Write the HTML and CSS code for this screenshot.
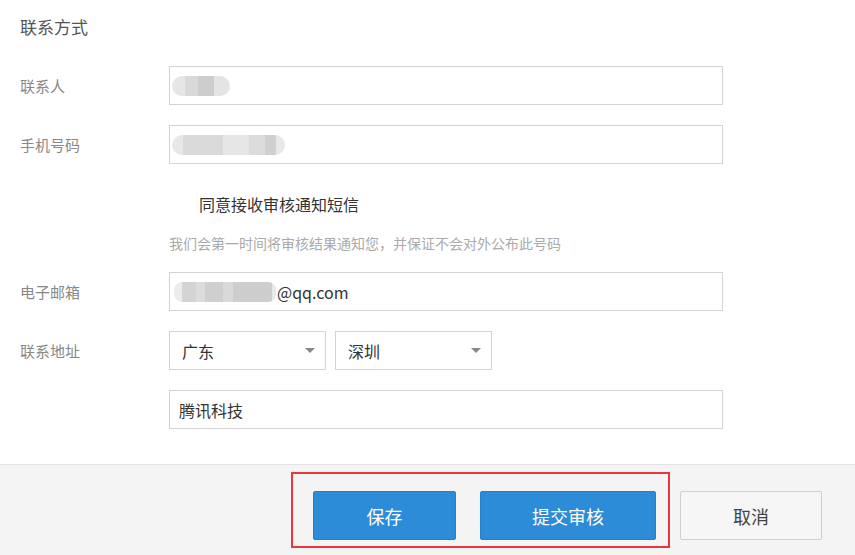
FILE: index.html
```html
<!DOCTYPE html>
<html lang="zh-CN">
<head>
<meta charset="utf-8">
<title>联系方式</title>
<link rel="stylesheet" href="styles.css">
</head>
<body>
<div class="page">
  <div class="content">
    <h2 class="title">联系方式</h2>
    <div class="row">
      <label class="label">联系人</label>
      <div class="field"><div class="input"><span class="blur blur-a"></span></div></div>
    </div>
    <div class="row">
      <label class="label">手机号码</label>
      <div class="field"><div class="input"><span class="blur blur-b"></span></div></div>
    </div>
    <div class="check-row">
      <span class="check-box"></span>
      <span class="check-text">同意接收审核通知短信</span>
    </div>
    <div class="hint">我们会第一时间将审核结果通知您，并保证不会对外公布此号码</div>
    <div class="row row-email">
      <label class="label">电子邮箱</label>
      <div class="field"><div class="input"><span class="blur blur-c"></span><span class="val">@qq.com</span></div></div>
    </div>
    <div class="row">
      <label class="label">联系地址</label>
      <div class="field selects">
        <div class="select"><span class="val">广东</span><span class="arrow"></span></div>
        <div class="select"><span class="val">深圳</span><span class="arrow"></span></div>
      </div>
    </div>
    <div class="row">
      <span class="label"></span>
      <div class="field"><div class="input"><span class="val">腾讯科技</span></div></div>
    </div>
  </div>
  <div class="footer">
    <div class="highlight">
      <button class="btn btn-primary btn-save">保存</button>
      <button class="btn btn-primary btn-submit">提交审核</button>
    </div>
    <button class="btn btn-default btn-cancel">取消</button>
  </div>
</div>
</body>
</html>
```
FILE: styles.css
```css
* { box-sizing: border-box; }
html, body {
  margin: 0;
  padding: 0;
  background: #fff;
  font-family: "Microsoft YaHei", "Noto Sans CJK SC", "Noto Sans", sans-serif;
}
.page {
  width: 855px;
  height: 555px;
  display: flex;
  flex-direction: column;
  overflow: hidden;
}
.content {
  padding: 15px 0 0 20px;
  flex: 1;
}
.title {
  margin: 0;
  font-size: 17px;
  line-height: 24px;
  font-weight: normal;
  color: #555;
  height: 51px;
}
.row {
  display: flex;
  align-items: center;
  margin-bottom: 20px;
}
.label {
  width: 149px;
  flex: none;
  font-size: 15px;
  color: #888;
}
.field { width: 554px; }
.input {
  height: 39px;
  border: 1px solid #d3d3d3;
  background: #fff;
  display: flex;
  align-items: center;
  padding-left: 2px;
  font-size: 16px;
  color: #333;
}
.input .val { padding-left: 7px; }
.input .blur + .val { padding-left: 1px; }
.blur {
  display: inline-block;
  height: 20px;
  border-radius: 10px;
  filter: blur(0.6px);
}
.blur-a {
  width: 58px;
  background: linear-gradient(90deg, #e6e6e6 0 22%, #d9d9d9 22% 45%, #cdcdcd 45% 72%, #e4e4e4 72%);
}
.blur-b {
  width: 113px;
  background: linear-gradient(90deg, #e8e8e8 0 10%, #dadada 10% 45%, #e6e6e6 45% 68%, #dcdcdc 68% 82%, #d0d0d0 82% 92%, #e8e8e8 92%);
}
.blur-c {
  width: 102px;
  margin-left: 2px;
  border-radius: 8px;
  background: linear-gradient(90deg, #ececec 0 8%, #d4d4d4 8% 22%, #dcdcdc 22% 30%, #cfcfcf 30% 48%, #d9d9d9 48% 58%, #cdcdcd 58% 96%, #e8e8e8 96%);
}
.check-row {
  display: flex;
  align-items: center;
  margin: 30px 0 0 149px;
  height: 20px;
}
.check-box { width: 30px; }
.check-text {
  font-size: 16px;
  color: #333;
}
.hint {
  margin: 19px 0 0 149px;
  font-size: 14px;
  line-height: 20px;
  color: #aaa;
}
.row-email { margin-top: 19px; }
.selects {
  display: flex;
  gap: 9px;
}
.select {
  width: 157px;
  height: 39px;
  border: 1px solid #d3d3d3;
  display: flex;
  align-items: center;
  justify-content: space-between;
  padding: 0 10px 0 12px;
  font-size: 16px;
  color: #333;
}
.arrow {
  width: 0;
  height: 0;
  border-left: 5px solid transparent;
  border-right: 5px solid transparent;
  border-top: 5px solid #888;
}
.footer {
  height: 91px;
  flex: none;
  background: #f4f4f4;
  border-top: 1px solid #e4e4e4;
  display: flex;
  justify-content: flex-end;
  align-items: flex-start;
  padding: 7px 33px 0 0;
}
.highlight {
  border: 2px solid #e8383d;
  display: flex;
  gap: 24px;
  padding: 17px 12px 6px 20px;
  margin-right: 10px;
}
.btn {
  height: 49px;
  font-family: inherit;
  font-size: 18px;
  border-radius: 2px;
  cursor: pointer;
}
.btn-primary {
  background: #2d8cd7;
  border: 1px solid #2680c9;
  color: #fff;
}
.btn-save { width: 143px; }
.btn-submit { width: 176px; }
.btn-default {
  background: #f6f6f6;
  border: 1px solid #d0d0d0;
  color: #444;
}
.btn-cancel {
  width: 142px;
  margin-top: 19px;
}
```
